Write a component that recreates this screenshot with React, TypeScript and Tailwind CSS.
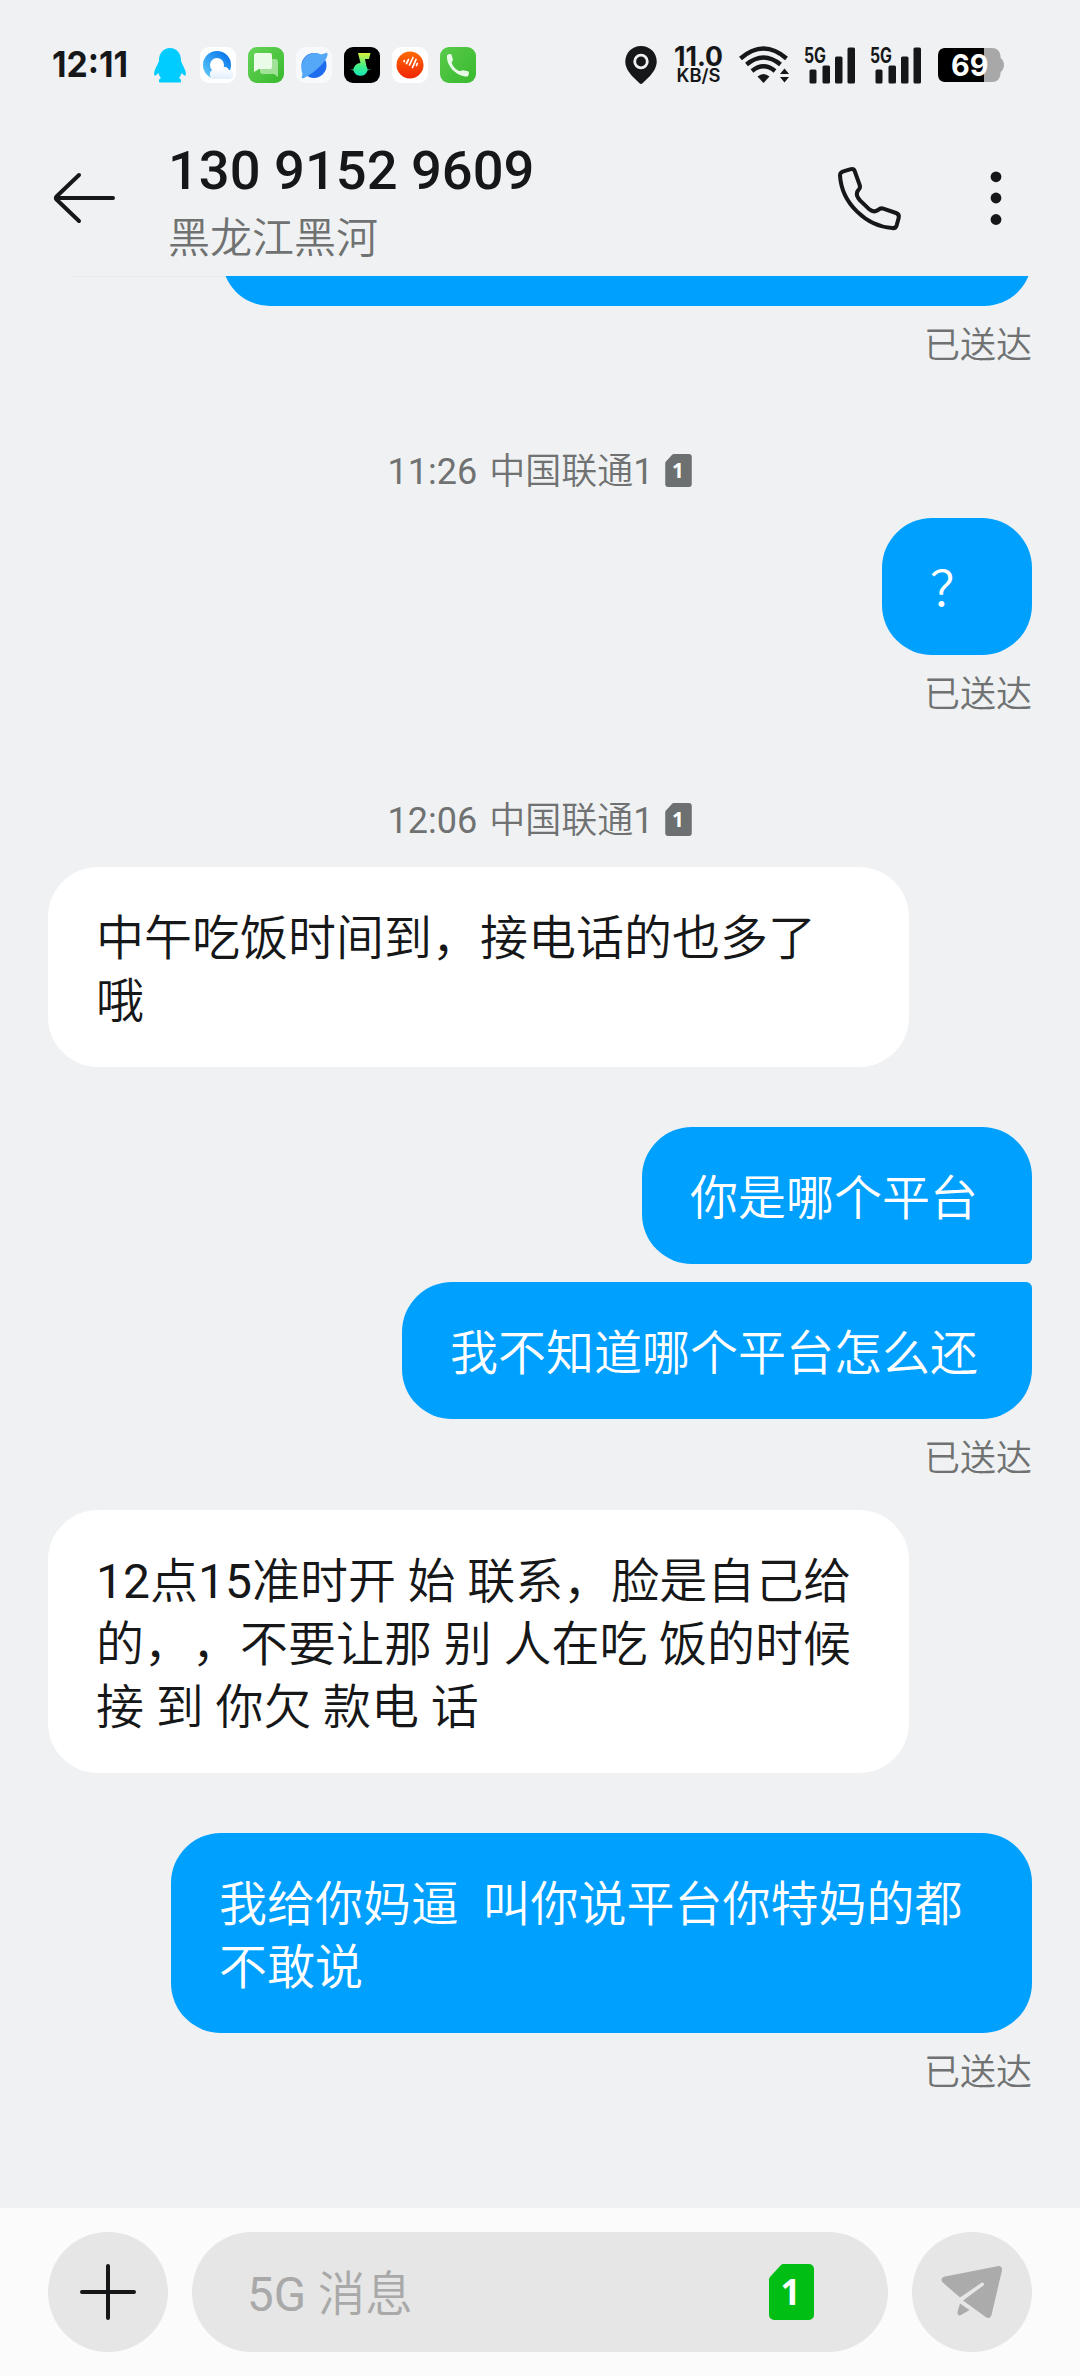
import type { ReactNode } from "react";
import clsx from "clsx";

type Side = "in" | "out";

type Item =
  | { kind: "time"; time: string }
  | { kind: "sent" }
  | { kind: "bubble"; side: Side; text: string; className: string };

const items: Item[] = [
  // scrolled half out of view, only its bottom edge is visible
  { kind: "bubble", side: "out", text: " ", className: "-mt-[107px] w-[810px] rounded-[48px]" },
  { kind: "sent" },
  { kind: "time", time: "11:26" },
  { kind: "bubble", side: "out", text: "？", className: "mt-[22px] rounded-[50px]" },
  { kind: "sent" },
  { kind: "time", time: "12:06" },
  {
    kind: "bubble",
    side: "in",
    text: "中午吃饭时间到，接电话的也多了\n哦",
    className: "mt-[22px] w-[861px] rounded-[50px]",
  },
  {
    kind: "bubble",
    side: "out",
    text: "你是哪个平台",
    className: "mt-[60px] rounded-[50px] rounded-br-[6px]",
  },
  {
    kind: "bubble",
    side: "out",
    text: "我不知道哪个平台怎么还",
    className: "mt-[18px] rounded-[50px] rounded-tr-[6px]",
  },
  { kind: "sent" },
  {
    kind: "bubble",
    side: "in",
    text: "12点15准时开 始 联系，脸是自己给\n的，，不要让那 别 人在吃 饭的时候\n接 到 你欠 款电 话",
    className: "mt-[27px] w-[861px] rounded-[50px]",
  },
  {
    kind: "bubble",
    side: "out",
    text: "我给你妈逼  叫你说平台你特妈的都\n不敢说",
    className: "mt-[60px] w-[861px] rounded-[50px]",
  },
  { kind: "sent" },
];

function SimIcon({ className }: { className: string }) {
  return (
    <svg className={className} viewBox="0 0 45 56">
      <path
        d="M14.5 0H40a5 5 0 0 1 5 5V51a5 5 0 0 1-5 5H5a5 5 0 0 1-5-5V15.500a4 4 0 0 1 1.200-2.800L11.700 1.200A4 4 0 0 1 14.500 0Z"
        fill="currentColor"
      />
      <text
        x="21.500"
        y="41"
        textAnchor="middle"
        fontSize="35"
        fontWeight="700"
        fill="#fff"
        className="font-['Noto_Sans',sans-serif]"
      >
        1
      </text>
    </svg>
  );
}

function AppTile({ className, children }: { className?: string; children: ReactNode }) {
  return (
    <svg className={clsx("size-9 rounded-[9px]", className)} viewBox="0 0 36 36">
      {children}
    </svg>
  );
}

function NotificationIcons() {
  return (
    <div className="flex gap-3">
      <AppTile>
        <path
          d="M18 1C11.500 1 7 6 7 13c0 3-3.500 7-4.700 12-.6 3 .4 4.300 1.600 3.300L6.500 26c.4 2 1.300 3.700 2.600 5-1.500.6-2.600 1.600-2 4.500h21.800c.6-2.900-.5-3.900-2-4.500 1.300-1.300 2.200-3 2.600-5l2.600 2.300c1.200 1 2.200-.3 1.600-3.300C32.500 20 29 16 29 13 29 6 24.500 1 18 1Z"
          fill="#00ccff"
        />
      </AppTile>
      <AppTile className="bg-white">
        <defs>
          <linearGradient id="ring" x1="0" y1="1" x2="1" y2="0">
            <stop offset="0" stopColor="#58c4f8" />
            <stop offset="1" stopColor="#0a78ec" />
          </linearGradient>
          <linearGradient id="cloud" x1="0" y1="0" x2="0" y2="1">
            <stop offset="0" stopColor="#fff" />
            <stop offset="1" stopColor="#e2eefb" />
          </linearGradient>
        </defs>
        <circle cx="17" cy="18" r="10.500" fill="none" stroke="url(#ring)" strokeWidth="7" />
        <path
          d="M13 32a5 5 0 0 1 .5-9.500c2-.5 3.500.5 4.500 1.500a6 6 0 0 1 11-1c3 .5 5 2.500 4.500 5-.4 2.500-2.500 4-5 4Z"
          fill="url(#cloud)"
        />
      </AppTile>
      <AppTile className="bg-gradient-to-br from-[#66d558] to-[#36b82b]">
        <path
          d="M13 12h14a3 3 0 0 1 3 3v15l-4-3H15a3 3 0 0 1-3-3V12Z"
          fill="#b5eaae"
          opacity="0.8"
        />
        <path d="M8 6h14a2 2 0 0 1 2 2v12a2 2 0 0 1-2 2H11l-5 3V8a2 2 0 0 1 2-2Z" fill="#eafbe8" />
      </AppTile>
      <AppTile className="bg-[#f8f9fc]">
        <circle cx="18" cy="18.500" r="12.500" fill="#1d6cf0" />
        <path
          d="M30 6c2-1 2 2 .5 5C27 18 15 28 8 31c-3 1-2.500-1-1.500-4C4 20 6 12 12 8c5-3 10-2.500 13-.5Z"
          fill="#55a8f8"
        />
      </AppTile>
      <AppTile className="bg-black">
        <defs>
          <linearGradient id="note" x1="0" y1="0" x2="0" y2="1">
            <stop offset="0" stopColor="#d8f03c" />
            <stop offset="0.6" stopColor="#3df08a" />
            <stop offset="1" stopColor="#19e6b8" />
          </linearGradient>
        </defs>
        <path
          d="M14 6h12.500l-1.500 6H21l1.500 7.500c.8 1 1 2 1 3H27l-3.500 1a7.300 7.300 0 0 1-14 0L6 22.500h3.300a7.300 7.300 0 0 1 7.200-6.500Z"
          fill="url(#note)"
        />
      </AppTile>
      <AppTile className="bg-white">
        <defs>
          <linearGradient id="disc" x1="0" y1="0" x2="0" y2="1">
            <stop offset="0" stopColor="#ff6a00" />
            <stop offset="1" stopColor="#f02408" />
          </linearGradient>
        </defs>
        <circle cx="18" cy="18" r="13.500" fill="url(#disc)" />
        <path
          d="M12 14.500l.4-.8M14.500 16.500l2-4M17.500 18l3.500-7.500M20.500 20.500l3.500-8M24.500 18.500l.8-2"
          stroke="#fff"
          strokeWidth="1.700"
          strokeLinecap="round"
          fill="none"
        />
      </AppTile>
      <AppTile className="bg-gradient-to-br from-[#58cb4b] to-[#38b92d]">
        <path
          d="M7 8.500c1.500-2 4-2 4.700-.3l1.200 4c.3 1.500-1.400 2.300-1.200 3.800 1 3.500 4 6.500 7.300 8 1.500.4 2.500-1 4-.8l5 1c1.500.6 1 4-.5 5.300C18 30 6 20 7 8.500Z"
          fill="#e9f9e7"
        />
      </AppTile>
    </div>
  );
}

function Signal() {
  return (
    <svg className="h-[38px] w-[51px] overflow-visible" viewBox="0 0 51 38">
      <text
        x="0"
        y="16.500"
        fontSize="21"
        fontWeight="700"
        textLength="22"
        lengthAdjust="spacingAndGlyphs"
        fill="#161718"
        className="font-[Inter,sans-serif]"
      >
        5G
      </text>
      <g fill="#161718">
        <rect x="5.500" y="23.500" width="7" height="14" rx="1.500" />
        <rect x="18.500" y="19.500" width="7.500" height="18" rx="1.500" />
        <rect x="31" y="10.500" width="7.500" height="27" rx="1.500" />
        <rect x="43.500" y="1.500" width="7.500" height="36" rx="1.500" />
      </g>
    </svg>
  );
}

function StatusBar() {
  return (
    <div className="flex h-[130px] items-center pl-[52px] font-[Inter,sans-serif] text-[#161718]">
      <svg className="h-10 w-[76px] overflow-visible" viewBox="0 0 76 40">
        <text
          x="0"
          y="32"
          fontSize="36"
          fontWeight="700"
          textLength="76"
          lengthAdjust="spacingAndGlyphs"
          fill="currentColor"
        >
          12:11
        </text>
      </svg>
      <div className="ml-6">
        <NotificationIcons />
      </div>
      <svg className="ml-[149px] h-[38px] w-8" viewBox="0 0 32 38">
        <path
          d="M16 0C7 0 .3 7 .3 15.500c0 5.500 3 10 6.700 14.500l7.500 7.300c1 .9 2 .9 3 0L25 30c3.700-4.500 6.700-9 6.700-14.500C31.700 7 25 0 16 0Z"
          fill="currentColor"
        />
        <circle cx="16" cy="15.500" r="6.300" fill="none" stroke="#eff1f3" strokeWidth="2.800" />
      </svg>
      <svg className="ml-4 h-10 w-[50px] overflow-visible" viewBox="0 0 50 40" fill="currentColor">
        <text x="1" y="20.500" fontSize="27" fontWeight="700" textLength="49" lengthAdjust="spacingAndGlyphs">
          11.0
        </text>
        <text x="3.500" y="36.500" fontSize="18" fontWeight="600" textLength="44" lengthAdjust="spacingAndGlyphs">
          KB/S
        </text>
      </svg>
      <svg className="ml-4 h-[38px] w-[52px]" viewBox="0 0 52 38">
        <g fill="none" stroke="currentColor" strokeWidth="4.400">
          <path d="M1.500 12.500Q24.500-7.500 47.500 12.500" />
          <path d="M7.500 18.500Q24.500 4.500 41.500 18.500" />
          <path d="M13 25Q24.500 15.500 36 25" />
        </g>
        <path d="M24.500 37 18.500 30.500q6-5 12 0Z" fill="currentColor" />
        <path d="M45.500 22.500 50 28h-9ZM45.500 36.500 50 31h-9Z" fill="currentColor" />
      </svg>
      <div className="ml-[13px] flex gap-[15px]">
        <Signal />
        <Signal />
      </div>
      <svg className="ml-[17px] h-[34px] w-[66px] overflow-visible" viewBox="0 0 66 34">
        <path
          d="M8 0H54c5 0 8 3 8.500 8v2c2 1 3.500 4 3.500 7s-1.500 6-3.500 7v2c-.5 5-3.500 8-8.500 8H8Z"
          fill="#a8a8a8"
        />
        <path d="M46 0H8C2.500 0 0 2.500 0 8v18c0 5.500 2.500 8 8 8H46Z" fill="#000" />
        <text
          x="13"
          y="28"
          fontSize="30"
          fontWeight="700"
          textLength="37.500"
          lengthAdjust="spacingAndGlyphs"
          fill="#fff"
        >
          69
        </text>
      </svg>
    </div>
  );
}

function Header() {
  return (
    <header className="flex h-[146px] items-start">
      <svg className="mt-[42px] ml-[52px] h-[52px] w-16" viewBox="0 0 64 52">
        <path
          d="M61 26H4M27 3 4.500 24.500a2 2 0 0 0 0 3L27 49"
          fill="none"
          stroke="#161718"
          strokeWidth="4"
          strokeLinecap="round"
          strokeLinejoin="round"
        />
      </svg>
      <div className="ml-[52px] flex-1">
        <h1 className="mt-[9px] text-[54.3px] leading-[64px] font-medium text-[#161718]">130 9152 9609</h1>
        <p className="mt-1.5 text-[42px] leading-[60px] font-[350] text-[#707272]">黑龙江黑河</p>
      </div>
      <svg className="mt-[35px] h-[68px] w-[68px]" viewBox="708 134 204 204">
        <path
          d="M720 165Q720 157 728 154L750 147Q761 144 764 152L779 194Q782 202 776 208Q769 214 771 226Q773 232 780 240L808 267Q821 278 834 269Q842 262 850 265L888 278Q899 282 896 293L890 315Q887 325 876 323C800 318 725 250 720 165Z"
          fill="none"
          stroke="#161718"
          strokeWidth="12"
          strokeLinejoin="round"
        />
      </svg>
      <svg className="mt-[41px] mr-[78px] ml-[86px] h-[54px] w-3" viewBox="0 0 12 54" fill="#161718">
        <circle cx="6" cy="5.800" r="5.400" />
        <circle cx="6" cy="27" r="5.400" />
        <circle cx="6" cy="48.500" r="5.400" />
      </svg>
    </header>
  );
}

// Latin digits take the regular weight, the Chinese text around them a lighter one
function MixedText({ text }: { text: string }) {
  return text.split(/([0-9:]+)/).map((part, i) =>
    i % 2 === 1 ? (
      <span key={i} className="font-normal">
        {part}
      </span>
    ) : (
      part
    ),
  );
}

function Bubble({ side, text, className }: { side: Side; text: string; className: string }) {
  return (
    <div
      className={clsx(
        "shrink-0 pt-10 pb-[34px] pl-12 text-[48px] leading-[63px] font-[350] whitespace-pre [text-spacing-trim:space-all]",
        side === "out" ? "self-end bg-[#00a0ff] pr-[54px] text-white" : "self-start bg-white text-[#161718]",
        className,
      )}
    >
      <MixedText text={text} />
    </div>
  );
}

function Conversation() {
  return (
    <main className="flex min-h-0 flex-1 flex-col overflow-hidden px-12">
      <div className="mx-6 -mb-px h-px shrink-0 bg-[#e8eaec]" />
      {items.map((item, i) => {
        if (item.kind === "time") {
          return (
            <div
              key={i}
              className="mt-[74px] flex h-[52px] shrink-0 items-center justify-center text-[36px] leading-[52px] font-[350] text-[#707272]"
            >
              <span className="pt-1 whitespace-pre">
                <MixedText text={item.time} />
              </span>
              <span className="ml-3 pt-1">
                <MixedText text="中国联通1" />
              </span>
              <SimIcon className="ml-3 h-[33px] w-[27px] text-[#6d7070]" />
            </div>
          );
        }
        if (item.kind === "sent") {
          return (
            <div
              key={i}
              className="mt-3.5 -mb-0.5 h-[52px] shrink-0 self-end text-[36px] leading-[52px] font-[350] text-[#707272]"
            >
              已送达
            </div>
          );
        }
        return <Bubble key={i} side={item.side} text={item.text} className={item.className} />;
      })}
    </main>
  );
}

function Composer() {
  return (
    <footer className="flex h-[168px] gap-6 bg-[#fbfbfb] px-12 pt-6">
      <button type="button" aria-label="添加" className="flex size-[120px] items-center justify-center rounded-full bg-[#e6e6e6]">
        <svg className="size-14" viewBox="0 0 56 56">
          <path d="M28 2v52M2 28h52" stroke="#161718" strokeWidth="4" strokeLinecap="round" />
        </svg>
      </button>
      <div className="flex h-[120px] flex-1 items-center justify-between rounded-full bg-[#e6e6e6] pr-[74px] pl-[55px]">
        <span className="pt-1.5 text-[47.5px] leading-[64px] font-[350] text-[#a9a9a9]">
          <span className="font-normal">5G</span> 消息
        </span>
        <SimIcon className="h-14 w-[45px] text-[#00be14]" />
      </div>
      <button type="button" aria-label="发送" className="flex size-[120px] items-center justify-center rounded-full bg-[#e6e6e6]">
        <svg className="h-[54px] w-[62px]" viewBox="0 0 62 54">
          <path
            d="M4 11.500 56.500 1.200c3-.6 5 1.200 4.500 4L50.500 50c-.8 3-3.500 3.800-5.800 2L22 35.500 42.500 20.500a1.700 1.700 0 0 0-2-2.700L19 32.500 1.800 17.500C-.6 15.400.4 12.300 4 11.500Z"
            fill="#ababab"
          />
          <path d="M19 38.500 28.500 45 20 50c-2.500 1.200-3.800-.5-3.500-3.500Z" fill="#ababab" />
        </svg>
      </button>
    </footer>
  );
}

export default function App() {
  return (
    <div className="flex h-[2376px] w-[1080px] flex-col overflow-hidden bg-[#eff1f3] font-[Roboto,'Noto_Sans_CJK_SC',sans-serif]">
      <StatusBar />
      <Header />
      <Conversation />
      <Composer />
    </div>
  );
}
